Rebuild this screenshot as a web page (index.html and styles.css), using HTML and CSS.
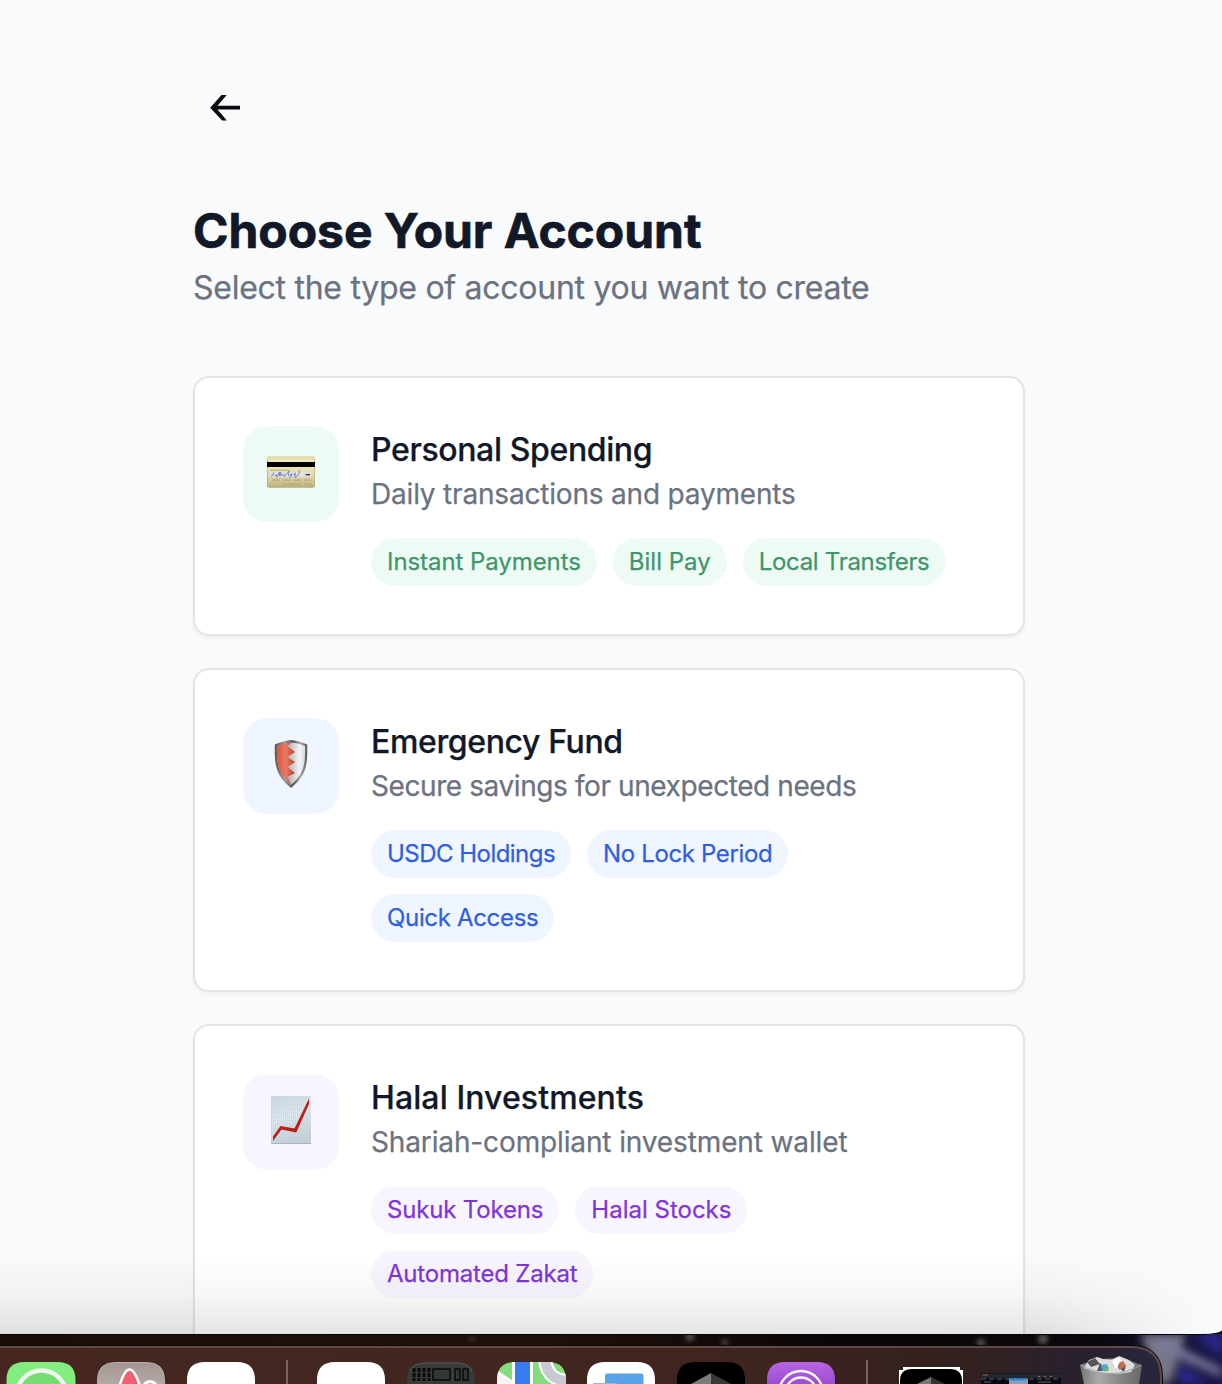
FILE: index.html
```html
<!DOCTYPE html>
<html lang="en">
<head>
<meta charset="utf-8">
<title>Choose Your Account</title>
<link rel="stylesheet" href="styles.css">
</head>
<body>
<div class="screen">
  <div class="window">
    <main class="content">
      <a class="back" aria-label="Back"><svg width="32" height="32" viewBox="0 0 32 32"><path d="M31 13.800v3.800H8.500l9.400 10.800h-4.800L1.200 15.700 12.500 2.900h5.200L8.500 13.800z" fill="#090b10"/></svg></a>
      <header class="heading">
        <h1>Choose Your Account</h1>
        <p>Select the type of account you want to create</p>
      </header>
      <div class="cards">
        <section class="card green">
          <div class="icon">
            <svg width="48" height="48" viewBox="0 0 48 48">
              <defs><linearGradient id="gold" x1="0" y1="0" x2="0" y2="1"><stop offset="0" stop-color="#ddd5a2"/><stop offset=".15" stop-color="#f2ebc0"/><stop offset=".6" stop-color="#e4dba9"/><stop offset="1" stop-color="#bdb27c"/></linearGradient></defs>
              <rect x="0" y="6.3" width="48" height="31.3" rx="2" fill="url(#gold)"/>
              <path d="M.4 8.5v26a2.5 2.5 0 0 0 2.5 2.7h42.500a2.500 2.500 0 0 0 2.300-2.500v-26" fill="none" stroke="#a79d70" stroke-width=".6"/>
              <rect x="0" y="12" width="48" height="5" fill="#000"/>
              <path d="M3.500 20.200h19.500" stroke="#a49c75" stroke-width="1" stroke-dasharray="2 .7"/>
              <rect x="3" y="22.300" width="41" height="4.800" fill="#dfe1e7"/>
              <path d="M4 26.500q3-1 2.500-4M8 26q1-3 1.500 0t2-2 1 2l1-4 .5 4 2-2 1 2M17 27l5-6-.5 5M23 28l1-4q2-1 .5 2M27 26q2-6 1-1t3 0q2-1 1-5" fill="none" stroke="#6381bd" stroke-width=".9"/>
              <path d="M38.500 24.700h4.500" stroke="#333" stroke-width="1.400"/>
              <path d="M5 30.200h8m3 0h8m3 0h7m3 0h7M15 34.300h18m4 0h8" stroke="#b5ac83" stroke-width="2" stroke-dasharray="1.500 .6"/>
            </svg>
          </div>
          <div class="info">
            <h2>Personal Spending</h2>
            <p>Daily transactions and payments</p>
            <div class="tags"><span>Instant Payments</span><span>Bill Pay</span><span>Local Transfers</span></div>
          </div>
        </section>
        <section class="card blue">
          <div class="icon">
            <svg width="48" height="48" viewBox="0 0 48 48">
              <defs>
                <linearGradient id="steel"><stop offset="0" stop-color="#555"/><stop offset=".3" stop-color="#999"/><stop offset=".55" stop-color="#555"/><stop offset=".8" stop-color="#aaa"/><stop offset="1" stop-color="#555"/></linearGradient>
                <linearGradient id="silver"><stop offset=".35" stop-color="#a8abae"/><stop offset=".8" stop-color="#f2f3f4"/><stop offset="1" stop-color="#d7dadc"/></linearGradient>
                <linearGradient id="red"><stop offset="0" stop-color="#d7563f"/><stop offset=".5" stop-color="#ea7a63"/><stop offset="1" stop-color="#b93c27"/></linearGradient>
              </defs>
              <path d="M24 0Q31 .6 40.200 4.500C40.500 24 40 35 24 48 8 35 7.500 24 7.800 4.500Q17 .6 24 0z" fill="url(#steel)"/>
              <path d="M24 2.600Q31 3 38 6C38.300 24 37.500 33 24 45 10.500 33 9.700 24 10 6Q17 3 24 2.600z" fill="url(#silver)"/>
              <path d="M25 2.600 20.500 6l7.500 6-7.500 5 7.500 5-7.500 5 7.500 6-7.500 4 4 8C10.500 33 9.700 24 10 6Q17 3 24 2.600z" fill="url(#red)"/>
            </svg>
          </div>
          <div class="info">
            <h2>Emergency Fund</h2>
            <p>Secure savings for unexpected needs</p>
            <div class="tags"><span>USDC Holdings</span><span>No Lock Period</span><span>Quick Access</span></div>
          </div>
        </section>
        <section class="card purple">
          <div class="icon">
            <svg width="48" height="48" viewBox="0 0 48 48">
              <defs>
                <pattern id="grid" width="2" height="2" patternUnits="userSpaceOnUse"><path d="M0 .5h2M.5 0v2" stroke="#c3d3de" stroke-width=".5"/></pattern>
                <linearGradient id="paper" x1="0" y1="0" x2=".3" y2="1"><stop offset="0" stop-color="#ced9e1"/><stop offset=".5" stop-color="#e5eef4"/><stop offset="1" stop-color="#c3ced5"/></linearGradient>
              </defs>
              <path d="M4 0h40v48H4z" fill="url(#paper)"/><path d="M4 0h40v48H4z" fill="url(#grid)"/><path d="M4 47.500h40" stroke="#aab5bb"/>
              <path d="M6 45v-4.500l7.500-10.500 14 2.500L42 2.500V8L29.300 36.500 14.500 33.500z" fill="#b91e18"/>
            </svg>
          </div>
          <div class="info">
            <h2>Halal Investments</h2>
            <p>Shariah-compliant investment wallet</p>
            <div class="tags"><span>Sukuk Tokens</span><span>Halal Stocks</span><span>Automated Zakat</span></div>
          </div>
        </section>
      </div>
    </main>
    <div class="shade"></div>
  </div>
  <svg class="desktop" width="1222" height="50" viewBox="0 0 1222 50">
    <defs>
      <linearGradient id="wall"><stop offset="0" stop-color="#1a0d09"/><stop offset=".43" stop-color="#20110b"/><stop offset=".7" stop-color="#0a0506"/><stop offset=".9" stop-color="#0b080d"/><stop offset="1" stop-color="#19184a"/></linearGradient>
      <linearGradient id="dock"><stop offset="0" stop-color="#452720"/><stop offset=".6" stop-color="#40251f"/><stop offset=".83" stop-color="#32211f"/><stop offset=".94" stop-color="#292130"/><stop offset="1" stop-color="#29263d"/></linearGradient>
      <linearGradient id="gray" x1="0" y1="0" x2="0" y2="1"><stop offset="0" stop-color="#a39692"/><stop offset="1" stop-color="#b4aaa7"/></linearGradient>
      <linearGradient id="violet" x1="0" y1="0" x2="0" y2="1"><stop offset="0" stop-color="#b865e5"/><stop offset="1" stop-color="#9d4dd1"/></linearGradient>
      <linearGradient id="can"><stop offset="0" stop-color="#777"/><stop offset=".3" stop-color="#aaa"/><stop offset=".65" stop-color="#858585"/><stop offset="1" stop-color="#686868"/></linearGradient>
      <filter id="soft" x="-50%" y="-50%" width="200%" height="200%"><feGaussianBlur stdDeviation="4"/></filter>
      <filter id="faint" x="-50%" y="-50%" width="200%" height="200%"><feGaussianBlur stdDeviation="2.500"/></filter>
      <clipPath id="map"><path d="M497 50V46q0-18 18-18h33q18 0 18 18v4z"/></clipPath>
    </defs>
    <path d="M0 0h1222v50H0z" fill="url(#wall)"/>
    <g filter="url(#soft)"><path d="M1140 0h46l-8 24-8 26h-10z" fill="#777785"/><path d="M1155 0l67 35v8l-60-26z" fill="#77789c"/><path d="M1192 0h30v22zM1178 28l30 22h-30z" fill="#29258a"/></g>
    <g fill="#5c5755" filter="url(#faint)"><circle cx="690" cy="3" r="4"/><circle cx="725" cy="9" r="3"/><circle cx="981" cy="9" r="4"/><circle cx="1043" cy="5" r="5"/><circle cx="472" cy="5" r="2"/></g>
    <path d="M0 .5h1206" stroke="#030504"/>
    <path d="M-2 11.500h1133q31.500 0 31.500 32V52H-2z" fill="url(#dock)" stroke="#0d0809"/>
    <path d="M-2 13h1133q30 0 30 31v8" fill="none" stroke="#6d5651" stroke-width="2" opacity=".75"/>
    <path d="M287 26v24M867 26v24" stroke="#7b625d" stroke-width="2"/>
    <path d="M6.500 50v-4q0-18 18-18h33q18 0 18 18v4z" fill="#84ed80"/>
    <ellipse cx="41.500" cy="62" rx="25" ry="25.500" fill="#75dc71" stroke="#f0f4ef" stroke-width="4.500"/>
    <path d="M97.500 52v-6q0-17.500 18-17.500h31q18 0 18 17.500v6z" fill="url(#gray)" stroke="#bbb0ad"/>
    <path d="M119 54q5-18.500 10.500-18.500t11 18.500z" fill="#ee6170" stroke="#fff" stroke-width="2.500"/><circle cx="150" cy="54" r="6.500" fill="#e993a0" stroke="#fff" stroke-width="3"/>
    <path d="M187 50v-4q0-18 18-18h32q18 0 18 18v4zM317 50v-4q0-18 18-18h32q18 0 18 18v4zM587 50v-4q0-18 18-18h32q18 0 18 18v4z" fill="#fff"/>
    <path d="M407 52v-6q0-17 18-17h32q18 0 18 17v6z" fill="#393b3b"/><path d="M410 37q4-8 15-8h32q11 0 15 8" fill="none" stroke="#5b5d5d"/>
    <path d="M414 34v13m5-13v13m5-13v13m5-13v13" stroke="#080909" stroke-width="3" stroke-dasharray="4 1"/><path d="M433 35h17v11h-17zM455 35h5v11h-5zM463 35h5v11h-5z" fill="#313636" stroke="#090a0a" stroke-width="1.500"/>
    <g clip-path="url(#map)"><path d="M497 28h70v22h-70z" fill="#83dc7d"/><path d="M497 36l15 10v4h-15z" fill="#f6f6f6"/><path d="M512 28h21v22h-21z" fill="#fff"/><path d="M515 28h15v22h-15z" fill="#397cf0"/><path d="M545 22q0 25 25 25" fill="none" stroke="#fff" stroke-width="14"/><path d="M545 22q0 25 25 25" fill="none" stroke="#c9c9d2" stroke-width="10"/></g>
    <path d="M605 50V42q0-2.500 2.500-2.500h33.500q2.500 0 2.500 2.500v8z" fill="#58a2e8"/><path d="M593 49.500h24" stroke="#94bad8"/>
    <path d="M677 50v-4q0-18 18-18h32q18 0 18 18v4z" fill="#000"/><path d="M691 50l20-11v11z" fill="#7b7b7b"/><path d="M711 39l20 11h-20z" fill="#393939"/>
    <path d="M767 50v-4q0-18 18-18h32q18 0 18 18v4z" fill="url(#violet)"/><g fill="none" stroke="#fff" stroke-width="2.300"><circle cx="801" cy="59" r="22"/><circle cx="801" cy="59" r="15.500"/></g>
    <path d="M899 50V36h4v-3h57v3h3v14z" fill="#fff"/><path d="M900 50v-3q0-12 12-12h38q12 0 12 12v3z" fill="#000"/><path d="M917 50l14-7v7z" fill="#777"/><path d="M931 43l14 7h-14z" fill="#333"/>
    <path d="M981 39.500h80V50h-80z" fill="#080b10"/><path d="M981 40h80v4h-80z" fill="#202832"/><path d="M981 45h80" stroke="#5c5e62" stroke-dasharray="5 3"/><path d="M1009 44.500h19v5.500h-19z" fill="#8da0b1"/><path d="M1010 45.500h16" stroke="#2685ea" stroke-width="2"/><path d="M1038 48h13M984 48h7" stroke="#5d6066"/><path d="M983 41h5" stroke="#c34b39"/><path d="M1038 42.500h18" stroke="#b45842" stroke-dasharray="2 4"/>
    <path d="M1080 31q31-13 62 0l-3 19h-55z" fill="url(#can)"/>
    <path d="M1084 34l5-8 8-3 6 2 8 1 8-4 10 4 6 5-4 7-13 2-16-1-10-2z" fill="#ddd"/><path d="M1087 28l8-4 5 6-9 3zM1119 28l7 3-2 7-6-5zM1097 37l3-8 7 8z" fill="#54565a"/><path d="M1101 31l6-1 2 6-7 1z" fill="#45a9d0"/><path d="M1103 36l6-3-1 4z" fill="#6dc34e"/><path d="M1118 30l5-3 3 5-7 4z" fill="#c86b42"/><path d="M1112 27l6-4 3 3-5 9z" fill="#fff"/>
    <path d="M1081 31q30 17 60 0" fill="none" stroke="#a6a6a6"/>
  </svg>
</div>
</body>
</html>
```
FILE: styles.css
```css
* { box-sizing: border-box; }
body { margin: 0; background: #0b0808; font-family: Inter, "Liberation Sans", sans-serif; color: #111827; -webkit-text-stroke: .25px; }
h1, h2, p { margin: 0; white-space: nowrap; }
svg { display: block; }
.screen { height: 1384px; overflow: hidden; display: flex; flex-direction: column; }
.window { position: relative; flex: 0 0 1334px; overflow: hidden; background: #f9fafc; border-bottom-right-radius: 20px 4px; }
.content { width: 832px; margin-left: 193px; padding-top: 92px; }
.back { display: block; width: 32px; margin-left: 16px; }
.heading { padding-top: 75px; margin-bottom: 64px; }
.heading h1 { font-size: 48px; line-height: 64px; font-weight: 700; letter-spacing: -.04px; -webkit-text-stroke-width: .7px; }
.heading p { font-size: 32px; line-height: 48px; padding-top: 1px; color: #6b7280; letter-spacing: -.27px; }
.cards { display: flex; flex-direction: column; gap: 32px; }
.card { display: flex; gap: 32px; padding: 48px; background: #fff; border: 2px solid #e4e4e7; border-radius: 16px; box-shadow: 0 2px 4px rgba(0, 0, 0, .05); }
.icon { flex: 0 0 96px; height: 96px; border-radius: 24px; display: flex; justify-content: center; padding-top: 22px; }
.green .icon { padding-top: 24px; }
.info { flex: 1; min-width: 0; }
.info h2 { font-size: 32px; line-height: 48px; font-weight: 500; }
.info p { font-size: 28px; line-height: 40px; color: #6b7280; }
.tags { display: flex; flex-wrap: wrap; gap: 16px; margin-top: 24px; }
.tags span { height: 48px; padding: 0 16px; border-radius: 24px; font-size: 24px; line-height: 48px; white-space: nowrap; }
.green .icon, .green .tags span { background: #eefbf5; }
.blue .icon, .blue .tags span { background: #eff6ff; }
.purple .icon, .purple .tags span { background: #f8f5ff; }
.green .tags span { color: #3f966b; }
.blue .tags span { color: #315ee0; }
.purple .tags span { color: #8135d8; }

/* optical tracking */
.green h2 { letter-spacing: -.37px; }
.blue h2 { letter-spacing: -.38px; }
.purple h2 { letter-spacing: .1px; }
.green p { letter-spacing: -.19px; }
.blue p { letter-spacing: -.41px; }
.purple p { letter-spacing: -.13px; }
.green .tags span:first-child { letter-spacing: -.07px; }
.green .tags span:last-child { letter-spacing: -.3px; }
.blue .tags span:first-child { letter-spacing: -.53px; }
.blue .tags span:nth-child(2) { letter-spacing: -.36px; }
.blue .tags span:last-child { letter-spacing: -.33px; }
.purple .tags span:first-child { letter-spacing: -.17px; }
.purple .tags span:last-child { letter-spacing: -.2px; }

.shade { position: absolute; inset: auto 0 0; height: 80px; background: linear-gradient(to bottom, rgba(0, 0, 0, 0), rgba(0, 0, 0, .03) 50%, rgba(0, 0, 0, .1)); mask-image: linear-gradient(to right, #000 85%, transparent 99%); }
.desktop { flex: none; }
```
